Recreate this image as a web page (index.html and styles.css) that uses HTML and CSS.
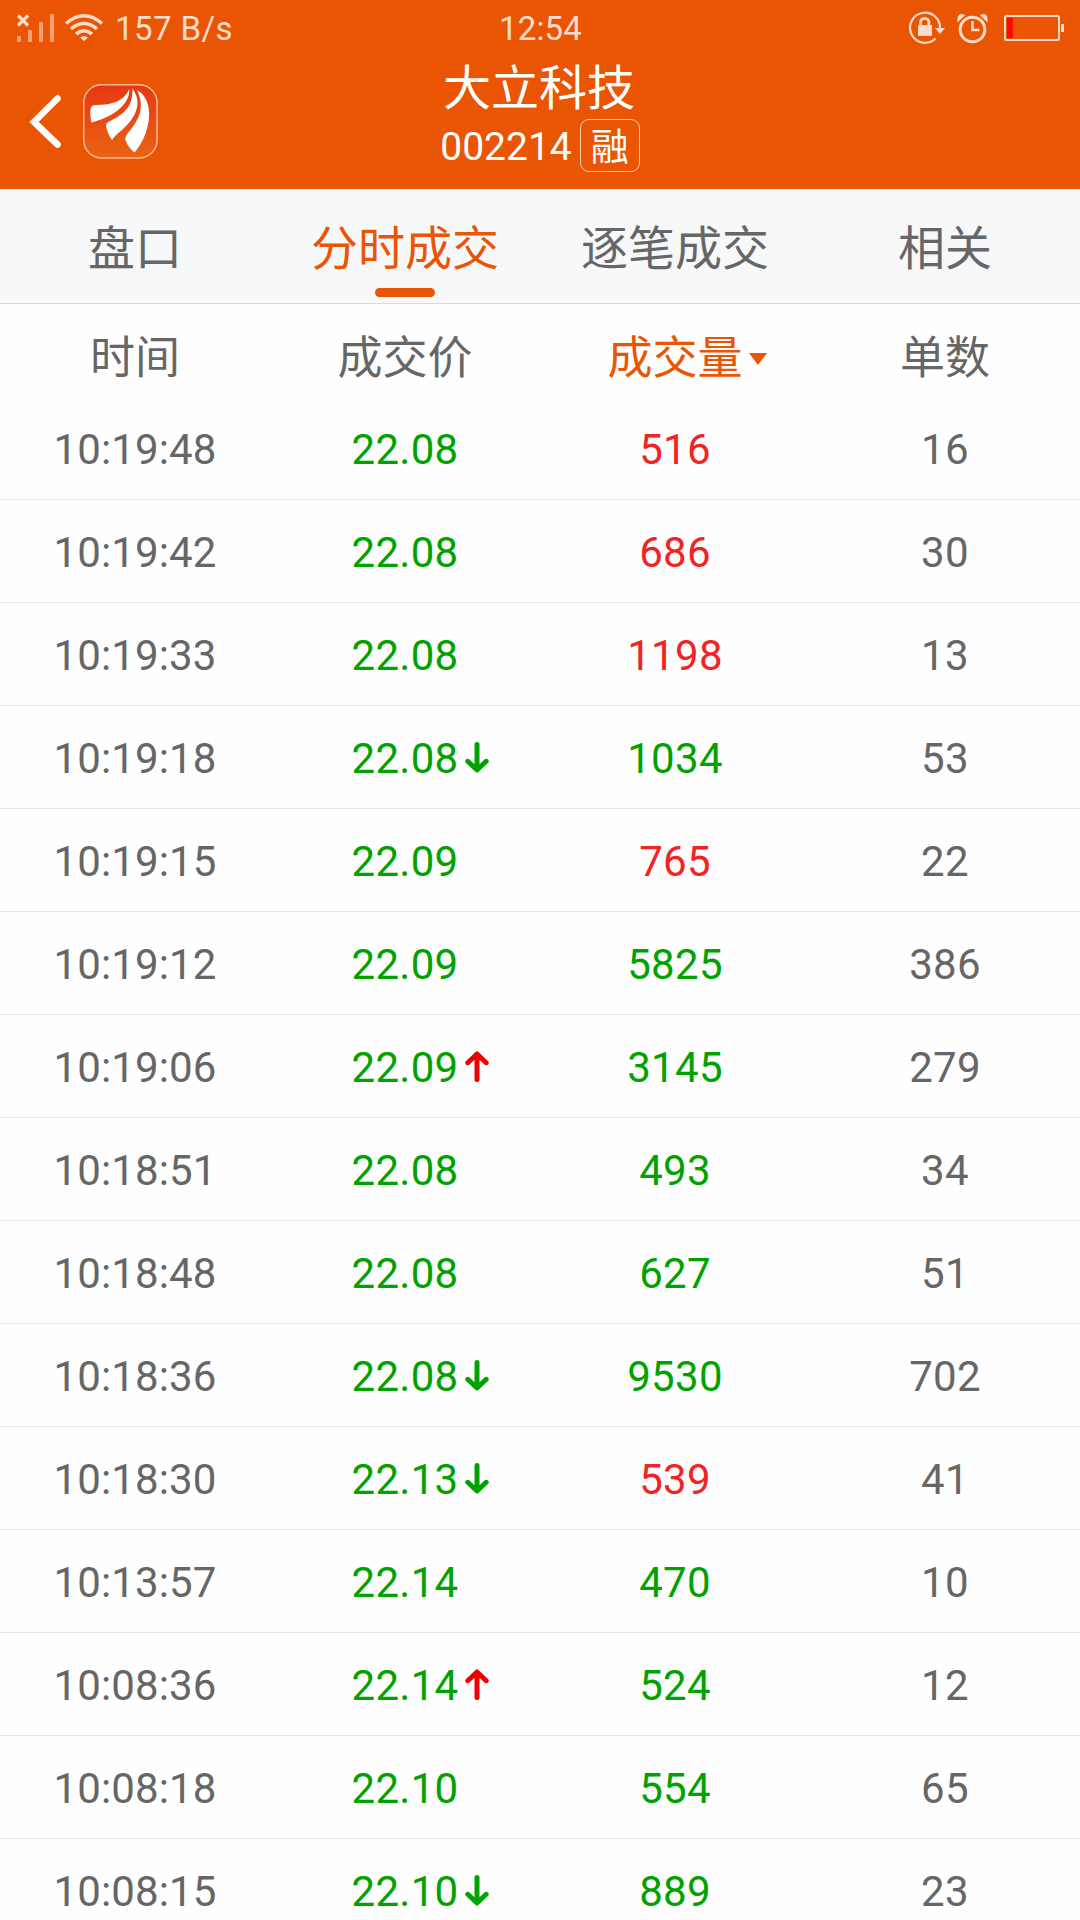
FILE: index.html
```html
<!DOCTYPE html>
<html lang="zh-CN">
<head>
    <meta charset="utf-8">
    <title>大立科技 002214</title>
    <link rel="stylesheet" href="styles.css">
</head>

<body>

<!-- arrows shared by the price cells -->
<svg class="defs">
    <symbol id="down" viewBox="0 0 24 32"><path d="M12 2.5V27M2.8 19.3L12 28L21.2 19.3" fill="none" stroke="currentColor" stroke-width="5" stroke-linecap="round" stroke-linejoin="round"/></symbol>
    <symbol id="up" viewBox="0 0 24 32"><path d="M12 28.5V4M2.8 11.7L12 3L21.2 11.7" fill="none" stroke="currentColor" stroke-width="5" stroke-linecap="round" stroke-linejoin="round"/></symbol>
</svg>

<div class="header">
    <div class="status">
        <div class="status-left">
            <svg width="90" height="32" viewBox="15 11 90 32">
                <g fill="#f5a075">
                    <rect x="17" y="35" width="4" height="6" rx="1"/>
                    <rect x="28" y="29" width="4" height="12" rx="1"/>
                    <rect x="39" y="21" width="4" height="20" rx="1"/>
                    <rect x="50" y="13" width="4" height="28" rx="1"/>
                </g>
                <path d="M18 14.5L28 24.5M28 14.5L18 24.5" stroke="#fbdccb" stroke-width="3.2"/>
                <g fill="none" stroke="#fbdccb" stroke-width="3.6">
                    <path d="M66 22.5Q84 7 102 22.5"/>
                    <path d="M71 28Q84 17 97 28"/>
                    <path d="M76 33Q84 26.5 92 33"/>
                </g>
                <path d="M80 36.5Q84 33.5 88 36.5L84 40Z" fill="#fbdccb"/>
            </svg>
            <span class="speed">157 B/s</span>
        </div>
        <span class="clock">12:54</span>
        <svg class="status-right" width="160" height="36" viewBox="906 9 160 36">
            <g fill="none" stroke="#fbdccb" stroke-width="2.2">
                <path d="M940 28A15 15 0 1 0 935.5 37.5"/>
                <path d="M920.5 25V21.5A4.2 4.2 0 0 1 928.9 21.5V25" stroke-width="2.8"/>
                <circle cx="972.5" cy="28.5" r="12.3" stroke-width="3"/>
                <path d="M972.5 20V29H979.5" stroke-width="2.6"/>
                <rect x="1005" y="15" width="54" height="24" rx="1.5" stroke-width="2"/>
            </g>
            <g fill="#fbdccb">
                <rect x="918" y="24" width="14" height="11" rx="1"/>
                <path d="M935 27H945L940 33Z"/>
                <path d="M957.5 21.5C956.5 15 960 11 965 14.2Z"/>
                <path d="M987.5 21.5C988.5 15 985 11 980 14.2Z"/>
                <rect x="1061" y="23" width="3" height="8"/>
            </g>
            <rect x="1007" y="17" width="6" height="20" fill="#ff0a0a"/>
        </svg>
    </div>
    <div class="nav">
        <div class="nav-icons">
            <svg width="32" height="56" viewBox="0 0 32 56"><path d="M28.5 4.5L5 28L28.5 50.5" fill="none" stroke="#fff" stroke-width="6.6" stroke-linecap="round"/></svg>
            <svg width="76" height="76" viewBox="83 84 76 76">
                <defs><linearGradient id="logo" x1="0" y1="0" x2="0" y2="1"><stop offset="0" stop-color="#e73714"/><stop offset="1" stop-color="#ea6412"/></linearGradient></defs>
                <rect x="83.7" y="84.7" width="73.3" height="73.3" rx="18" fill="url(#logo)" stroke="#f8b596" stroke-width="1.5"/>
                <g fill="#fff">
                    <path d="M129.3 89C130 103 116 116 91.5 122.5C90.5 118 90 113 90.6 109C91 106 93 105 96 105C113 105 124 101 129.3 89Z"/>
                    <path d="M132.3 88.5C142 101 138 116 122 130C118 133 114.5 136 112 140C109 136 107 131 106.2 127C105.5 123 108 122 112 120C128 112 133 103 132.3 88.5Z"/>
                    <path d="M137 90C150 97 152 116 146 132C143 141 139 147 134.5 152.5C130 149 127 145 125.5 140C124.5 136 128 133 132 128C141 116 144 105 137 90Z"/>
                </g>
            </svg>
        </div>
        <div class="stock">
            <div class="name">大立科技</div>
            <div class="code"><span class="digits">002214</span><span class="badge">融</span></div>
        </div>
    </div>
</div>

<div class="tabs">
    <div class="tab">盘口</div>
    <div class="tab active">分时成交</div>
    <div class="tab">逐笔成交</div>
    <div class="tab">相关</div>
</div>

<div class="row head">
    <span>时间</span>
    <span>成交价</span>
    <span class="sorted"><b class="value">成交量<svg class="caret" width="18" height="12" viewBox="0 0 18 12"><path d="M0 0H18L9 12Z" fill="currentColor"/></svg></b></span>
    <span>单数</span>
</div>

<div class="list">
    <div class="row"><span class="time">10:19:48</span><span class="green">22.08</span><span class="red">516</span><span>16</span></div>
    <div class="row"><span class="time">10:19:42</span><span class="green">22.08</span><span class="red">686</span><span>30</span></div>
    <div class="row"><span class="time">10:19:33</span><span class="green">22.08</span><span class="red">1198</span><span>13</span></div>
    <div class="row"><span class="time">10:19:18</span><span class="green"><b class="value">22.08<svg class="arrow"><use href="#down"/></svg></b></span><span class="green">1034</span><span>53</span></div>
    <div class="row"><span class="time">10:19:15</span><span class="green">22.09</span><span class="red">765</span><span>22</span></div>
    <div class="row"><span class="time">10:19:12</span><span class="green">22.09</span><span class="green">5825</span><span>386</span></div>
    <div class="row"><span class="time">10:19:06</span><span class="green"><b class="value">22.09<svg class="arrow up"><use href="#up"/></svg></b></span><span class="green">3145</span><span>279</span></div>
    <div class="row"><span class="time">10:18:51</span><span class="green">22.08</span><span class="green">493</span><span>34</span></div>
    <div class="row"><span class="time">10:18:48</span><span class="green">22.08</span><span class="green">627</span><span>51</span></div>
    <div class="row"><span class="time">10:18:36</span><span class="green"><b class="value">22.08<svg class="arrow"><use href="#down"/></svg></b></span><span class="green">9530</span><span>702</span></div>
    <div class="row"><span class="time">10:18:30</span><span class="green"><b class="value">22.13<svg class="arrow"><use href="#down"/></svg></b></span><span class="red">539</span><span>41</span></div>
    <div class="row"><span class="time">10:13:57</span><span class="green">22.14</span><span class="green">470</span><span>10</span></div>
    <div class="row"><span class="time">10:08:36</span><span class="green"><b class="value">22.14<svg class="arrow up"><use href="#up"/></svg></b></span><span class="green">524</span><span>12</span></div>
    <div class="row"><span class="time">10:08:18</span><span class="green">22.10</span><span class="green">554</span><span>65</span></div>
    <div class="row"><span class="time">10:08:15</span><span class="green"><b class="value">22.10<svg class="arrow"><use href="#down"/></svg></b></span><span class="green">889</span><span>23</span></div>
</div>

</body>
</html>
```
FILE: styles.css
```css
* { box-sizing: border-box; }
body { margin: 0; height: 1920px; overflow: hidden; background: #fefefe; color: #666; font-family: Roboto, "Noto Sans CJK SC", sans-serif; }
svg { display: block; flex: none; }
.defs { display: none; }

.header { height: 189px; background: #ea5504; color: #fff; }
.status { display: grid; grid-template-columns: 1fr auto 1fr; align-items: center; height: 54px; padding: 0 14px 0 15px; font-size: 33px; line-height: 54px; color: #fbdccb; }
.status-left { display: flex; align-items: center; gap: 10px; letter-spacing: 0.4px; }
.speed { padding-top: 1px; }
.clock { padding-top: 2px; letter-spacing: 0.2px; }
.status-right { justify-self: end; }

.nav { display: grid; grid-template-columns: 1fr auto 1fr; height: 135px; }
.nav-icons { display: flex; align-items: center; gap: 22px; height: 136px; padding-left: 29px; }
.stock { text-align: center; }
.name { height: 65px; font-size: 48px; line-height: 70px; margin-left: -2px; }
.code { display: flex; align-items: center; justify-content: center; gap: 8px; height: 53px; font-size: 39px; }
.digits { padding-top: 3px; }
.badge { width: 60px; height: 53px; border: 1px solid #fbc9ae; border-radius: 9px; font-size: 38px; line-height: 55px; }

.tabs { display: grid; grid-template-columns: repeat(4, 1fr); height: 115px; background: #f7f8fa; border-bottom: 1px solid #d6d8dc; }
.tab { display: flex; flex-direction: column; align-items: center; height: 108px; font-size: 47px; line-height: 120px; }
.active { color: #ea5504; }
.active::after { content: ""; width: 60px; height: 9px; margin-top: -21px; border-radius: 5px; background: #ea5504; }

.row { display: grid; grid-template-columns: repeat(4, 1fr); height: 103px; border-bottom: 1px solid #e4e4e4; font-size: 42px; line-height: 106px; letter-spacing: 0.3px; text-align: center; }
.head { height: 93px; border: 0; font-size: 45px; line-height: 110px; letter-spacing: 0; }
.time { letter-spacing: 0.1px; }
.sorted { color: #ea5504; }
.green { color: #00a200; }
.red { color: #f22323; }

/* arrows hang off the value so the number itself stays centred */
.value { position: relative; font-weight: normal; }
.arrow { position: absolute; left: 100%; top: 50%; width: 24px; height: 32px; margin: -17px 0 0 6px; }
.up { color: #ee0000; }
.caret { position: absolute; left: 100%; top: 50%; margin: -6px 0 0 6px; }
```
